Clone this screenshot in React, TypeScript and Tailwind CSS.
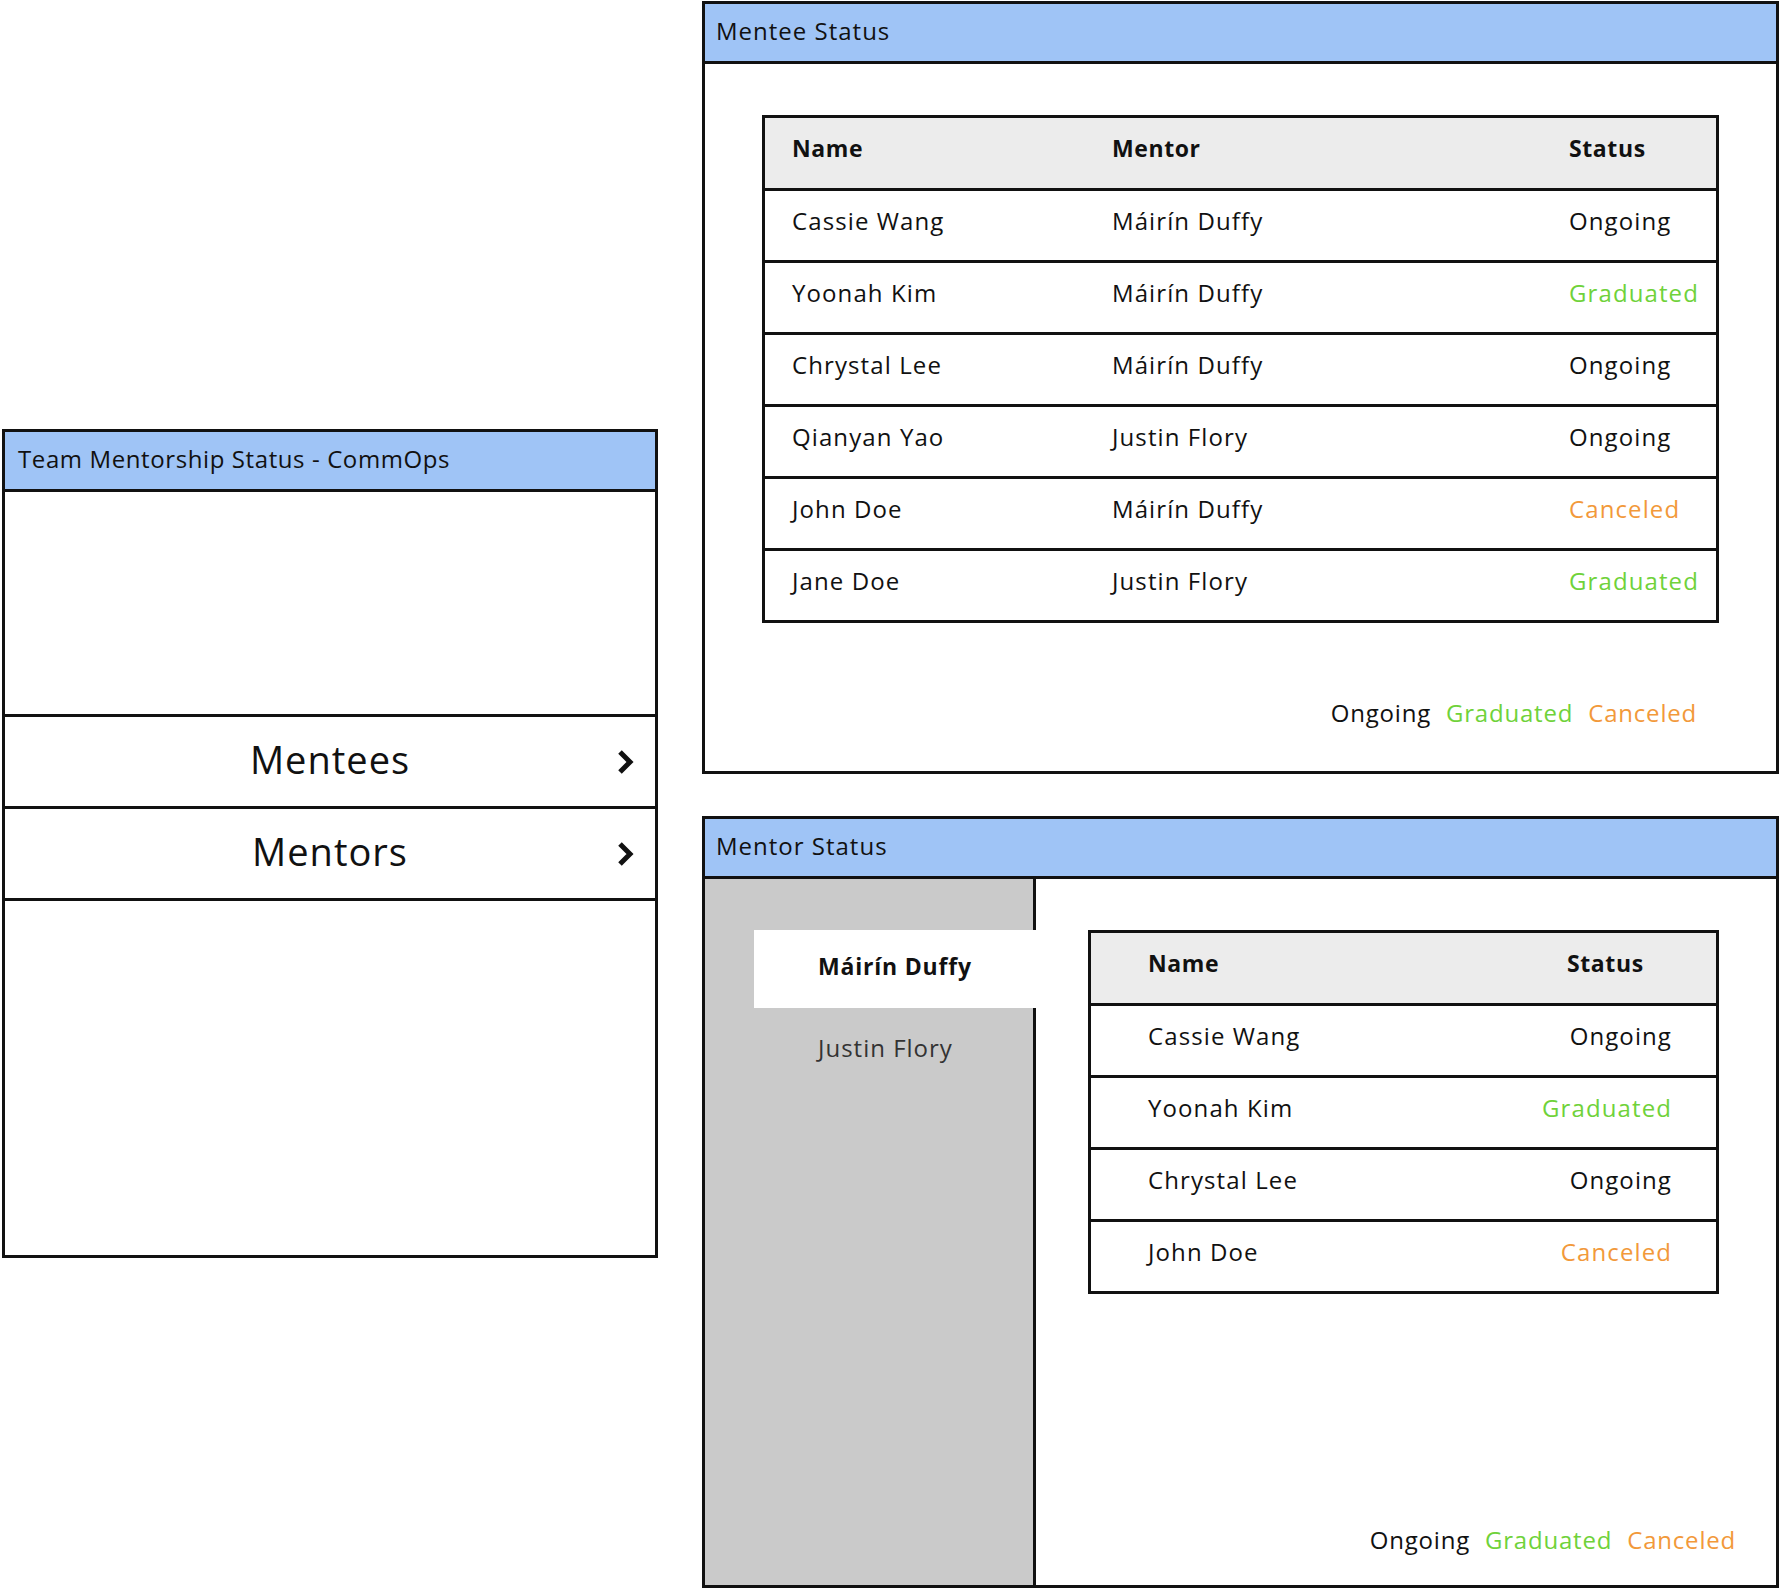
const font = { fontFamily: '"Open Sans", "Noto Sans", sans-serif' };

type Status = "Ongoing" | "Graduated" | "Canceled";

const menteeRows: { name: string; mentor: string; status: Status }[] = [
  { name: "Cassie Wang", mentor: "Máirín Duffy", status: "Ongoing" },
  { name: "Yoonah Kim", mentor: "Máirín Duffy", status: "Graduated" },
  { name: "Chrystal Lee", mentor: "Máirín Duffy", status: "Ongoing" },
  { name: "Qianyan Yao", mentor: "Justin Flory", status: "Ongoing" },
  { name: "John Doe", mentor: "Máirín Duffy", status: "Canceled" },
  { name: "Jane Doe", mentor: "Justin Flory", status: "Graduated" },
];

const mentorRows: { name: string; status: Status }[] = [
  { name: "Cassie Wang", status: "Ongoing" },
  { name: "Yoonah Kim", status: "Graduated" },
  { name: "Chrystal Lee", status: "Ongoing" },
  { name: "John Doe", status: "Canceled" },
];

const statusColor = (s: Status) => {
  switch (s) {
    case "Graduated": return "text-[#6fd23a]";
    case "Canceled": return "text-[#f2993a]";
    default: return "text-[#111]";
  }
};

function TitleBar({ title, pad = "pl-[11px] tracking-[1px]" }: { title: string; pad?: string }) {
  return (
    <div className={`h-[60px] shrink-0 bg-[#9fc4f6] border-b-[3px] border-[#111] flex items-center pb-[3px] text-[24px] text-[#111] ${pad}`}>
      {title}
    </div>
  );
}

function Legend() {
  return (
    <div className="flex gap-[15px] text-[24px] tracking-[0.8px]">
      <span className="text-[#111]">Ongoing</span>
      <span className="text-[#6fd23a]">Graduated</span>
      <span className="text-[#f2993a]">Canceled</span>
    </div>
  );
}

function Chevron() {
  return (
    <svg className="absolute right-[21px] top-1/2 -translate-y-1/2" width="18" height="28" viewBox="0 0 18 28" fill="none">
      <path d="M4 4 L14 14 L4 24" stroke="#111" strokeWidth="5" strokeLinejoin="miter" />
    </svg>
  );
}

export default function App() {
  return (
    <div style={font} className="w-[1780px] h-[1592px] bg-white flex items-start pl-[2px] text-[#111]">
      {/* Team panel */}
      <div className="mt-[429px] w-[656px] h-[829px] border-[3px] border-[#111] flex flex-col">
        <TitleBar title="Team Mentorship Status - CommOps" pad="pl-[13px] tracking-[0.6px]" />
        <div className="h-[225px] shrink-0 border-b-[3px] border-[#111]" />
        {["Mentees", "Mentors"].map(label => (
          <div key={label} className="h-[92px] shrink-0 border-b-[3px] border-[#111] relative flex items-center justify-center pb-[4px] text-[38px] tracking-[1px]">
            <span>{label}</span>
            <Chevron />
          </div>
        ))}
      </div>

      <div className="ml-[44px] w-[1077px] flex flex-col">
        {/* Mentee Status */}
        <div className="mt-[1px] h-[773px] border-[3px] border-[#111] flex flex-col">
          <TitleBar title="Mentee Status" />
          <div className="flex-1 flex flex-col px-[57px] pt-[51px]">
            <div className="border-[3px] border-[#111] text-[24px] tracking-[1.1px]">
              <div className="h-[70px] bg-[#ececec] flex items-center pl-[27px] pb-[9px] font-bold text-[23px] tracking-[0.6px]">
                <span className="w-[320px]">Name</span>
                <span className="w-[457px]">Mentor</span>
                <span>Status</span>
              </div>
              {menteeRows.map(r => (
                <div key={r.name} className="h-[72px] border-t-[3px] border-[#111] flex items-center pl-[27px] pb-[9px]">
                  <span className="w-[320px]">{r.name}</span>
                  <span className="w-[457px]">{r.mentor}</span>
                  <span className={statusColor(r.status)}>{r.status}</span>
                </div>
              ))}
            </div>
            <div className="flex justify-end mt-[72px] pr-[22px]">
              <Legend />
            </div>
          </div>
        </div>

        {/* Mentor Status */}
        <div className="mt-[42px] h-[772px] border-[3px] border-[#111] flex flex-col">
          <TitleBar title="Mentor Status" />
          <div className="flex-1 flex">
            <div className="w-[331px] shrink-0 bg-[#cacaca] border-r-[3px] border-[#111] flex flex-col pt-[51px] pl-[49px] -mr-[3px] relative z-10 text-[24px]">
              <div className="h-[78px] w-[285px] bg-white flex items-center pl-[64px] pb-[6px] font-bold tracking-[0.8px] text-[23px]">
                Máirín Duffy
              </div>
              <div className="h-[86px] flex items-center pl-[64px] pb-[6px] tracking-[1px] text-[#333]">
                Justin Flory
              </div>
            </div>
            <div className="flex-1 flex flex-col pl-[55px] pr-[57px] pt-[51px]">
              <div className="border-[3px] border-[#111] text-[24px] tracking-[1.1px]">
                <div className="h-[70px] bg-[#ececec] flex items-center justify-between pl-[57px] pr-[50px] pb-[9px] font-bold text-[23px] tracking-[0.6px]">
                  <span>Name</span>
                  <span className="w-[99px]">Status</span>
                </div>
                {mentorRows.map(r => (
                  <div key={r.name} className="h-[72px] border-t-[3px] border-[#111] flex items-center justify-between pl-[57px] pr-[44px] pb-[9px]">
                    <span>{r.name}</span>
                    <span className={statusColor(r.status)}>{r.status}</span>
                  </div>
                ))}
              </div>
              <div className="flex-1" />
              <div className="flex justify-end mb-[27px] -mr-[17px]">
                <Legend />
              </div>
            </div>
          </div>
        </div>
      </div>
    </div>
  );
}
